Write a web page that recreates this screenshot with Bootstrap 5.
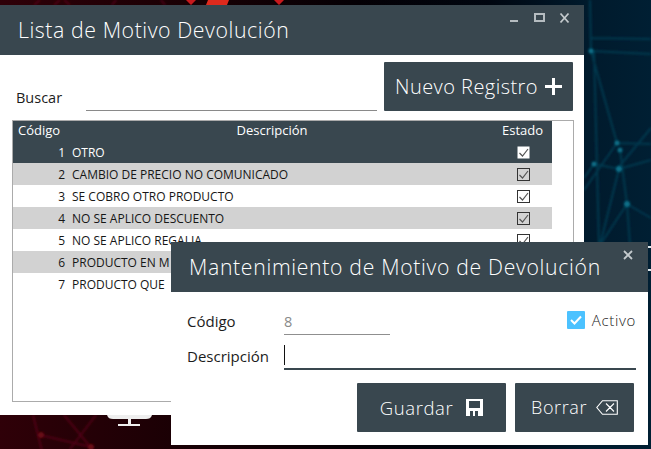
<!DOCTYPE html>
<html lang="es">
<head>
<meta charset="utf-8">
<title>Lista de Motivo Devolución</title>
<link href="https://cdn.jsdelivr.net/npm/bootstrap@5.3.0/dist/css/bootstrap.min.css" rel="stylesheet">
<style>
html,body{margin:0;height:449px;overflow:hidden;background:#000}
body{font-family:"Open Sans","Noto Sans",sans-serif;color:#1c1c1c;position:relative;width:651px}
.desk{position:absolute;inset:0;width:651px;height:449px}
.win{position:absolute;background:#fff;display:flex;flex-direction:column}
.win-list{left:0;top:5px;width:584px;height:410px}
.win-edit{left:171px;top:242px;width:477px;height:203px}
.bar{height:50px;background:#39474f;color:#fff;font-weight:300;display:flex;align-items:center;position:relative;flex:none}
.bar-a{font-size:21.3px;padding-left:18px;letter-spacing:.57px}
.bar-b{font-size:21.2px;padding-left:18px;letter-spacing:.69px}
.wctl{position:absolute;display:block}
.dark-btn{background:#39474f;color:#fff;border:0;border-radius:1px;display:flex;align-items:center;justify-content:center;font-weight:300;padding:0;flex:none}
.dark-btn:hover{background:#39474f;color:#fff}
.new-btn{width:189px;height:49px;font-size:20px;letter-spacing:.45px;gap:7px}
.tools{height:65px;padding:7px 11px 0 16px;display:flex;flex:none}
.lbl-find{font-size:14.500px;margin-top:25px;width:70px;flex:none}
.line-find{width:291px;height:1px;background:#8a8a8a;margin-top:48px;flex:none}
.tools .new-btn{margin-left:7px}
.gridbox{margin:0 10px 0 12px;height:282px;border:1px solid #ababab;background:#fff;flex:none;overflow:hidden}
.grid-t{width:539px;border-collapse:collapse;table-layout:fixed;font-size:12px;margin:0}
.grid-t th,.grid-t td{padding:0;height:22px;vertical-align:middle;font-weight:400;white-space:nowrap;color:#161616}
.grid-t th{height:20px;font-size:13px}
.grid-t tbody .c-code,.grid-t tbody .c-desc{padding-top:2px}
.c-code{width:52px;text-align:right}
.c-desc{padding-left:7px!important}
.c-st{width:59px;text-align:center}
.grid-t tbody .c-st{padding-left:2px}
.grid-t thead th,.grid-t .r-sel td{background:#39474f;color:#fff}
.grid-t .r-alt td{background:#d2d2d2}
.grid-t thead .c-code{text-align:left;padding-left:5px!important}
.grid-t thead .c-desc{text-align:center;padding-left:0!important;padding-right:14px}
.tick{display:block;margin:0 auto}
.frm{padding:0 12px 0 16px;flex:1;position:relative}
.frm-row{display:flex;font-size:15px}
.frm-l{width:97px;flex:none}
.r1{height:44px;padding-top:20px;align-items:center}
.r1 .frm-l{margin-top:-5px}
.val8{width:106px;height:22px;border-bottom:1px solid #8f8f8f;color:#8a8a8a;flex:none;line-height:18px;margin-top:-1px;font-size:14.500px}
.act{margin-left:auto;display:flex;align-items:center;gap:7px;margin-top:-8px;font-weight:300;letter-spacing:.65px;color:#222}
.cb{width:18px;height:18px;background:#4cc2ff;border-radius:1px;display:flex;align-items:center;justify-content:center}
.r2{height:35px;margin-top:1px;align-items:center}
.r2 .frm-l{margin-top:3px}
.val-d{flex:1;height:25px;border-bottom:2px solid #39474f;position:relative;margin-top:5px}
.caret-i{position:absolute;left:0;top:0;width:1px;height:20px;background:#111}
.btns{display:flex;justify-content:flex-end;gap:9px;margin-top:11px;padding-right:2px}
.b-save{width:149px;height:49px;font-size:18.500px;letter-spacing:.6px;gap:13px}
.b-del{width:119px;height:49px;font-size:18px;letter-spacing:.6px;gap:9px}
</style>
</head>
<body>
<svg class="desk" viewBox="0 0 651 449" aria-hidden="true">
  <defs>
    <linearGradient id="bg" x1="0" x2="1" y1="0" y2="0">
      <stop offset="0" stop-color="#2f0008"/>
      <stop offset=".3" stop-color="#180004"/>
      <stop offset=".55" stop-color="#040005"/>
      <stop offset=".75" stop-color="#000610"/>
      <stop offset=".9" stop-color="#001a2c"/>
      <stop offset="1" stop-color="#001f33"/>
    </linearGradient>
    <filter id="soft"><feGaussianBlur stdDeviation="1"/></filter>
  </defs>
  <rect width="651" height="449" fill="url(#bg)"/>
  <g stroke="#4e0615" stroke-width="2" fill="none" filter="url(#soft)">
    <path d="M40 0l-6 5M60 0l-6 5M70 5l-6-5M112 5l4-5M165 5l-4-5"/>
    <path d="M33 415l9 36M40 435l51 12M64 415l28 34M96 415l-26 34"/>
  </g>
  <path d="M186 0h10l-5 5zM274 0h10l-5 5z" fill="#c8191d"/>
  <path d="M208 0h21l-2 5h-21z" fill="#df2a1d"/>
  <circle cx="41" cy="435" r="3" fill="#6a0818" filter="url(#soft)"/>
  <circle cx="91" cy="447" r="3" fill="#6a0818" filter="url(#soft)"/>
  <g stroke="#05384e" stroke-width="2" fill="none" filter="url(#soft)">
    <path d="M590 0l1 51 26 92M591 51l60 3M590 38l61 1M617 143l-33 47M594 164l25 5 32-9M620 150l7 54 3 41M619 169l-19 76M627 204l-27 41M627 204l24 14M617 143l34 1M594 164l-10 14M594 51l5 194M651 128l-34 41"/>
  </g>
  <g fill="#0a6f88" filter="url(#soft)">
    <circle cx="591" cy="51" r="2.500"/><circle cx="617" cy="143" r="2.500"/><circle cx="620" cy="150" r="2.500"/>
    <circle cx="594" cy="164" r="2.500"/><circle cx="619" cy="169" r="3"/><circle cx="627" cy="204" r="3"/>
  </g>
  <path d="M107 415h45c-1 3-3 4-6 4h-33c-3 0-5-1-6-4z" fill="#eee"/>
  <path d="M128 419h3v5h9v2h-22v-2h10z" fill="#eee"/>
  <path d="M648 246h3v2h-3zM648 269h3v2h-3z" fill="#dfe8ec"/>
</svg>

<section class="win win-list">
  <header class="bar bar-a">
    Lista de Motivo Devolución
    <svg class="wctl" style="left:510px;top:7px" width="64" height="14" viewBox="0 0 64 14" aria-hidden="true">
      <path d="M0 9h8" stroke="#b5bcc0" stroke-width="2"/>
      <path d="M25 2h9v7h-9z" fill="none" stroke="#b5bcc0" stroke-width="2"/>
      <path d="M50.500 1.500l8 9M58.500 1.500l-8 9" stroke="#c4cacd" stroke-width="1.800" fill="none"/>
    </svg>
  </header>
  <div class="tools">
    <label class="lbl-find">Buscar</label>
    <div class="line-find"></div>
    <button class="btn dark-btn new-btn" type="button">Nuevo Registro
      <svg width="17" height="17" viewBox="0 0 17 17" aria-hidden="true"><path d="M7 0h3v7h7v3h-7v7H7v-7H0V7h7z" fill="#fff"/></svg>
    </button>
  </div>
  <div class="gridbox">
    <table class="grid-t">
      <thead><tr><th class="c-code">Código</th><th class="c-desc">Descripción</th><th class="c-st">Estado</th></tr></thead>
      <tbody>
        <tr class="r-sel"><td class="c-code">1</td><td class="c-desc">OTRO</td><td class="c-st"><svg class="tick" width="13" height="13" viewBox="0 0 13 13"><rect x=".5" y=".5" width="12" height="12" fill="#fff"/><path d="M2.500 7l3 3 5.500-7" fill="none" stroke="#555" stroke-width="1.200"/></svg></td></tr>
        <tr class="r-alt"><td class="c-code">2</td><td class="c-desc">CAMBIO DE PRECIO NO COMUNICADO</td><td class="c-st"><svg class="tick" width="13" height="13" viewBox="0 0 13 13"><rect x=".5" y=".5" width="12" height="12" fill="none" stroke="#333"/><path d="M2.500 7l3 3 5.500-7" fill="none" stroke="#555" stroke-width="1.200"/></svg></td></tr>
        <tr><td class="c-code">3</td><td class="c-desc">SE COBRO OTRO PRODUCTO</td><td class="c-st"><svg class="tick" width="13" height="13" viewBox="0 0 13 13"><rect x=".5" y=".5" width="12" height="12" fill="none" stroke="#333"/><path d="M2.500 7l3 3 5.500-7" fill="none" stroke="#555" stroke-width="1.200"/></svg></td></tr>
        <tr class="r-alt"><td class="c-code">4</td><td class="c-desc">NO SE APLICO DESCUENTO</td><td class="c-st"><svg class="tick" width="13" height="13" viewBox="0 0 13 13"><rect x=".5" y=".5" width="12" height="12" fill="none" stroke="#333"/><path d="M2.500 7l3 3 5.500-7" fill="none" stroke="#555" stroke-width="1.200"/></svg></td></tr>
        <tr><td class="c-code">5</td><td class="c-desc">NO SE APLICO REGALIA</td><td class="c-st"><svg class="tick" width="13" height="13" viewBox="0 0 13 13"><rect x=".5" y=".5" width="12" height="12" fill="none" stroke="#333"/><path d="M2.500 7l3 3 5.500-7" fill="none" stroke="#555" stroke-width="1.200"/></svg></td></tr>
        <tr class="r-alt"><td class="c-code">6</td><td class="c-desc">PRODUCTO EN M</td><td class="c-st"></td></tr>
        <tr><td class="c-code">7</td><td class="c-desc">PRODUCTO QUE</td><td class="c-st"></td></tr>
      </tbody>
    </table>
  </div>
</section>

<section class="win win-edit">
  <header class="bar bar-b">
    Mantenimiento de Motivo de Devolución
    <svg class="wctl" style="left:452px;top:8px" width="11" height="11" viewBox="0 0 11 11" aria-hidden="true"><path d="M1 1l8 8M9 1l-8 8" stroke="#c4cacd" stroke-width="1.800"/></svg>
  </header>
  <div class="frm">
    <div class="frm-row r1">
      <span class="frm-l">Código</span>
      <span class="val8">8</span>
      <span class="act"><span class="cb"><svg width="12" height="10" viewBox="0 0 12 10"><path d="M1 5l3.500 3.500L11 1.500" fill="none" stroke="#fff" stroke-width="2"/></svg></span>Activo</span>
    </div>
    <div class="frm-row r2">
      <span class="frm-l">Descripción</span>
      <div class="val-d"><span class="caret-i"></span></div>
    </div>
    <div class="btns">
      <button class="btn dark-btn b-save" type="button">Guardar
        <svg width="17" height="17" viewBox="0 0 17 17" aria-hidden="true"><path fill-rule="evenodd" d="M0 0h17v17H0zM3 2v7h11V2zM4 12v5h3v-5zM9 12v5h3v-5z" fill="#fff"/></svg>
      </button>
      <button class="btn dark-btn b-del" type="button">Borrar
        <svg width="22" height="15" viewBox="0 0 22 15" aria-hidden="true"><path d="M6.500 .7H21.300V14.300H6.500L.8 7.500zM10 3.500l8 8M18 3.500l-8 8" fill="none" stroke="#fff" stroke-width="1.100"/></svg>
      </button>
    </div>
  </div>
</section>
<script src="https://cdn.jsdelivr.net/npm/bootstrap@5.3.0/dist/js/bootstrap.bundle.min.js"></script>
</body>
</html>
